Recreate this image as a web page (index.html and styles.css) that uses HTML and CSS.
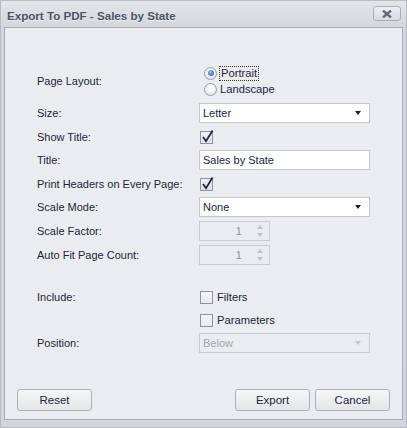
FILE: index.html
```html
<!DOCTYPE html>
<html>
<head>
<meta charset="utf-8">
<link rel="stylesheet" href="styles.css">
</head>
<body>
<div class="window">
  <div class="titlebar">
    <span class="title">Export To PDF - Sales by State</span>
    <span class="close">
      <svg width="10" height="8" viewBox="0 0 10 8"><path d="M1 0.5 L9 7.5 M9 0.5 L1 7.5" stroke="#656a76" stroke-width="2.4"/></svg>
    </span>
  </div>
  <div class="panel">
    <div class="form">
      <div class="label r-layout">Page Layout:</div>
      <div class="ctrl r-layout radios">
        <div class="radio-line"><span class="radio on"></span><span class="focus">Portrait</span></div>
        <div class="radio-line"><span class="radio"></span><span class="rtext">Landscape</span></div>
      </div>

      <div class="label r2">Size:</div>
      <div class="ctrl r2"><div class="combo wide"><span>Letter</span><span class="arrow"></span></div></div>

      <div class="label r3">Show Title:</div>
      <div class="ctrl r3"><span class="check"><svg width="15" height="15" viewBox="0 0 15 15"><path d="M3 7 L6 11.2 L12.6 0.6" fill="none" stroke="#1f2540" stroke-width="1.8"/></svg></span></div>

      <div class="label r4">Title:</div>
      <div class="ctrl r4"><div class="combo wide"><span>Sales by State</span></div></div>

      <div class="label r5">Print Headers on Every Page:</div>
      <div class="ctrl r5"><span class="check"><svg width="15" height="15" viewBox="0 0 15 15"><path d="M3 7 L6 11.2 L12.6 0.6" fill="none" stroke="#1f2540" stroke-width="1.8"/></svg></span></div>

      <div class="label r6">Scale Mode:</div>
      <div class="ctrl r6"><div class="combo wide"><span>None</span><span class="arrow"></span></div></div>

      <div class="label r7">Scale Factor:</div>
      <div class="ctrl r7"><div class="spin"><span class="num">1</span><span class="spinbtns"><span class="up"></span><span class="down"></span></span></div></div>

      <div class="label r8">Auto Fit Page Count:</div>
      <div class="ctrl r8"><div class="spin"><span class="num">1</span><span class="spinbtns"><span class="up"></span><span class="down"></span></span></div></div>

      <div class="label r9">Include:</div>
      <div class="ctrl r9 checkline"><span class="check empty"></span><span>Filters</span></div>

      <div class="label r10"></div>
      <div class="ctrl r10 checkline"><span class="check empty"></span><span>Parameters</span></div>

      <div class="label r11">Position:</div>
      <div class="ctrl r11"><div class="combo wide disabled"><span>Below</span><span class="arrow"></span></div></div>
    </div>
    <div class="buttons">
      <button class="btn">Reset</button>
      <span class="spacer"></span>
      <button class="btn">Export</button>
      <button class="btn">Cancel</button>
    </div>
  </div>
</div>
</body>
</html>
```
FILE: styles.css
```css
html, body {
  margin: 0;
  padding: 0;
}
body {
  width: 407px;
  height: 428px;
  font-family: "Liberation Sans", Arial, sans-serif;
  font-size: 11px;
  color: #1e2440;
  background: #d3d5da;
}
.window {
  box-sizing: border-box;
  width: 407px;
  height: 428px;
  display: flex;
  flex-direction: column;
  background: linear-gradient(#e4e5e9, #d4d6db 27px, #d3d5da);
  border: 1px solid #b8bbc2;
}
.titlebar {
  height: 26px;
  display: flex;
  align-items: center;
  justify-content: space-between;
  padding: 0 5px 0 6px;
}
.title {
  font-weight: bold;
  font-size: 11.6px;
  color: #4c5263;
  text-shadow: 0 1px 0 rgba(255,255,255,0.55);
  margin-top: 2px;
}
.close {
  width: 26px;
  height: 13px;
  border: 1px solid #a9adb6;
  border-radius: 3px;
  background: linear-gradient(#eceef1, #d9dbe0);
  display: flex;
  align-items: center;
  justify-content: center;
  margin-top: -1px;
}
.panel {
  flex: 1;
  margin: 0 3px 7px 3px;
  border: 1px solid #a9adb6;
  background: #ebecf0;
  display: flex;
  flex-direction: column;
}
.form {
  display: grid;
  grid-template-columns: 162px 171px;
  padding: 37px 0 0 32px;
  align-items: center;
}
.label {
  height: 20px;
  line-height: 20px;
  white-space: nowrap;
}
.ctrl {
  height: 20px;
  display: flex;
  align-items: center;
}
.r-layout { height: 32px; line-height: 32px; }
.r2 { margin-top: 6px; }
.r3 { margin-top: 4px; }
.r4 { margin-top: 3px; }
.r5 { margin-top: 4px; }
.r6 { margin-top: 3px; }
.r7 { margin-top: 4px; }
.r8 { margin-top: 4px; }
.r9 { margin-top: 22px; }
.r10 { margin-top: 3px; }
.r11 { margin-top: 3px; }

.radios {
  flex-direction: column;
  align-items: flex-start;
  padding-left: 5px;
}
.radio-line {
  height: 16px;
  display: flex;
  align-items: center;
  font-size: 11.2px;
}
.radio {
  box-sizing: border-box;
  width: 13px;
  height: 13px;
  border-radius: 50%;
  border: 1px solid #989ca6;
  background: radial-gradient(circle at 50% 40%, #ffffff 20%, #d9dbe0 90%);
  margin-right: 2px;
  position: relative;
}
.radio.on::after {
  content: "";
  position: absolute;
  left: 2.5px;
  top: 2.5px;
  width: 6px;
  height: 6px;
  border-radius: 50%;
  background: radial-gradient(circle at 40% 35%, #9cc0f2, #2f62c4 80%);
}
.focus {
  border: 1px dotted #333;
  padding: 0 1px;
  line-height: 13px;
}
.rtext { padding-left: 1px; }

.combo {
  box-sizing: border-box;
  height: 20px;
  width: 171px;
  border: 1px solid #c3c6cd;
  background: #fff;
  display: flex;
  align-items: center;
  justify-content: space-between;
  padding: 0 8px 0 3px;
  font-size: 11px;
}
.arrow {
  width: 0;
  height: 0;
  border-left: 3.5px solid transparent;
  border-right: 3.5px solid transparent;
  border-top: 4px solid #1c1f33;
}
.combo.disabled {
  background: #ebecf0;
  border-color: #c8cace;
  color: #a3a6b0;
}
.combo.disabled .arrow { border-top-color: #c4c6cc; }

.check {
  box-sizing: border-box;
  width: 13px;
  height: 13px;
  border: 1px solid #8f939c;
  background: linear-gradient(#f0f1f3, #e0e2e6);
  margin-left: 1px;
  position: relative;
  display: inline-block;
}
.check svg {
  position: absolute;
  left: -1px;
  top: -2px;
}
.check.empty {
  background: linear-gradient(#f5f6f7, #e8e9ec);
}
.checkline span:last-child {
  margin-left: 4px;
  font-size: 11.2px;
}

.spin {
  box-sizing: border-box;
  width: 71px;
  height: 20px;
  border: 1px solid #c8cacf;
  background: #ebecf0;
  display: flex;
  align-items: center;
  justify-content: flex-end;
  color: #8d93b0;
  font-size: 11.5px;
}
.num { margin-right: 11px; }
.spinbtns {
  width: 14px;
  display: flex;
  flex-direction: column;
  align-items: center;
  gap: 4px;
  margin-right: 2px;
}
.up {
  width: 0; height: 0;
  border-left: 3.5px solid transparent;
  border-right: 3.5px solid transparent;
  border-bottom: 4px solid #c2c5cc;
}
.down {
  width: 0; height: 0;
  border-left: 3.5px solid transparent;
  border-right: 3.5px solid transparent;
  border-top: 4px solid #c2c5cc;
}

.buttons {
  margin-top: auto;
  display: flex;
  gap: 5px;
  padding: 0 12px 8px 12px;
}
.spacer { flex: 1; }
.btn {
  box-sizing: border-box;
  width: 75px;
  height: 22px;
  border: 1px solid #aeb1b9;
  border-radius: 3px;
  background: linear-gradient(#f5f6f8, #e4e6e9);
  font-family: "Liberation Sans", Arial, sans-serif;
  font-size: 11.5px;
  color: #1e2440;
  padding: 0;
}
```
